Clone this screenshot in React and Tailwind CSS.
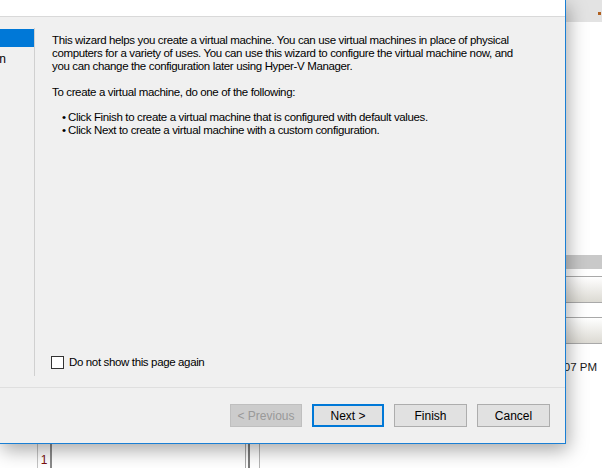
export default function App() {
  return (
    <div className="relative w-[602px] h-[468px] overflow-hidden bg-white font-['Liberation_Sans',sans-serif] text-[11.5px] tracking-[-0.36px] text-black">
      {/* background window behind the dialog */}
      <div className="absolute inset-0 flex">
        <div className="w-[566px] flex flex-col">
          <div className="flex-1" />
          <div className="h-[24px] flex relative">
            <div className="w-[37px]" />
            <div className="w-px bg-[#c4c4c4]" />
            <div className="w-[12px] flex items-end justify-center pb-[2px] text-[12px] tracking-normal text-[#7a1010] leading-none">1</div>
            <div className="w-[2px] bg-[#8a8a8a]" />
            <div className="w-[193px]" />
            <div className="w-px bg-[#a8a8a8]" />
            <div className="w-[2px]" />
            <div className="w-[2px] bg-[#7c7c7c]" />
            <div className="w-[9px]" />
            <div className="w-px bg-[#b4b4b4]" />
          </div>
        </div>
        <div className="flex-1 flex flex-col">
          <div className="h-[22px] bg-[#e3e3e3] flex justify-end items-start pt-[12px] pr-[1px]">
            <div className="w-[3px] h-[3px] bg-[#b06020]" />
          </div>
          <div className="h-[233px]" />
          <div className="h-[14px] bg-[#c9c9c9]" />
          <div className="h-[7px]" />
          <div className="h-px bg-[#a9a9a9]" />
          <div className="h-[25px] bg-gradient-to-b from-[#ffffff] to-[#dcdad3]" />
          <div className="h-px bg-[#a9a9a9]" />
          <div className="h-[14px]" />
          <div className="h-px bg-[#a9a9a9]" />
          <div className="h-[25px] bg-gradient-to-b from-[#ffffff] to-[#dcdad3]" />
          <div className="h-px bg-[#a9a9a9]" />
          <div className="h-[16px]" />
          <div className="flex justify-end pr-[5px] text-[11.5px] tracking-normal leading-[14px] text-[#1a1a1a] whitespace-nowrap">07 PM</div>
        </div>
      </div>

      {/* wizard dialog */}
      <div className="absolute left-0 top-0 w-[566px] h-[444px] flex flex-col bg-[#f0f0f0] border-r border-b border-[#1a7fd4] shadow-[2px_6px_18px_rgba(0,0,0,0.35)]">
        <div className="h-[17px] bg-white border-b border-[#d9d9d9]" />
        <div className="flex-1 flex">
          <div className="w-[35px] my-[11px] border-r border-[#d0d0d0] flex flex-col pt-px">
            <div className="h-[18px] bg-[#0078d7]" />
            <div className="mt-[4px] h-[17px] leading-[17px] text-[12px] tracking-normal overflow-hidden flex justify-end pr-[28px] whitespace-nowrap">n</div>
          </div>
          <div className="flex-1 flex flex-col pl-[17px] pt-[17px] pb-[18px] leading-[13px]">
            <p className="whitespace-nowrap">
              This wizard helps you create a virtual machine. You can use virtual machines in place of physical
              <br />
              computers for a variety of uses. You can use this wizard to configure the virtual machine now, and
              <br />
              you can change the configuration later using Hyper-V Manager.
            </p>
            <p className="mt-[13px] whitespace-nowrap">To create a virtual machine, do one of the following:</p>
            <ul className="mt-[12px] pl-[10px] whitespace-nowrap">
              <li className="flex"><span className="w-[6px]">•</span>Click Finish to create a virtual machine that is configured with default values.</li>
              <li className="flex"><span className="w-[6px]">•</span>Click Next to create a virtual machine with a custom configuration.</li>
            </ul>
            <div className="flex-1" />
            <label className="flex items-center gap-[5px] -ml-px">
              <span className="w-[13px] h-[13px] border border-[#333333] bg-white" />
              <span>Do not show this page again</span>
            </label>
          </div>
        </div>
        <div className="h-[56px] border-t border-[#dfdfdf] flex justify-end items-start pt-[16px] pr-[15px] gap-[10px] tracking-normal">
          <button className="w-[72px] h-[23px] bg-[#cccccc] border border-[#bfbfbf] text-[#999999] text-[12px]">&lt; Previous</button>
          <button className="w-[72px] h-[23px] bg-[#e1e1e1] border-2 border-[#0078d7] text-[12px]">Next &gt;</button>
          <button className="w-[73px] h-[23px] bg-[#e1e1e1] border border-[#adadad] text-[12px]">Finish</button>
          <button className="w-[73px] h-[23px] bg-[#e1e1e1] border border-[#adadad] text-[12px]">Cancel</button>
        </div>
      </div>
    </div>
  );
}
